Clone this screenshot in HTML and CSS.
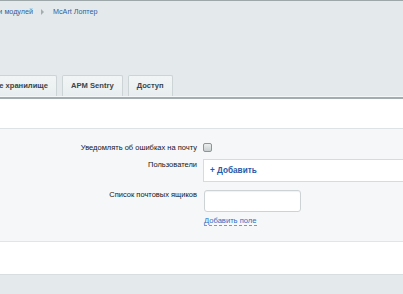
FILE: index.html
```html
<!DOCTYPE html>
<html lang="ru">
<head>
<meta charset="utf-8">
<title>McArt Лоптер</title>
<link rel="stylesheet" href="styles.css">
</head>
<body>
<div class="topline"></div>
<div class="breadcrumbs">
  <a class="crumb crumb-first" href="#">Настройки модулей</a>
  <span class="crumb-arrow"></span>
  <a class="crumb" href="#">McArt Лоптер</a>
</div>
<div class="tabs">
  <div class="tab tab-first">Облачное хранилище</div>
  <div class="tab">APM Sentry</div>
  <div class="tab">Доступ</div>
</div>
<div class="panel">
  <div class="panel-head"></div>
  <div class="form">
    <div class="row row-check">
      <div class="label">Уведомлять об ошибках на почту</div>
      <div class="control"><span class="checkbox"></span></div>
    </div>
    <div class="row row-users">
      <div class="label">Пользователи</div>
      <div class="control"><div class="userbox"><span class="add">+ Добавить</span></div></div>
    </div>
    <div class="row row-mail">
      <div class="label">Список почтовых ящиков</div>
      <div class="control">
        <div class="input"></div>
        <a class="addfield" href="#">Добавить поле</a>
      </div>
    </div>
  </div>
  <div class="panel-foot"></div>
</div>
</body>
</html>
```
FILE: styles.css
```css
html, body {
  margin: 0;
  padding: 0;
}
body {
  background: #e4eaeb;
  font-family: Arial, "Liberation Sans", Helvetica, sans-serif;
  font-size: 7.5px;
  color: #000;
  overflow: hidden;
  height: 294px;
}
.topline {
  height: 1px;
  background: #9da6a8;
}
.breadcrumbs {
  display: flex;
  align-items: center;
  height: 13px;
  margin-top: 4px;
  font-size: 7.2px;
  white-space: nowrap;
}
.crumb {
  color: #2f5f9e;
  text-decoration: none;
}
.crumb-first {
  flex: none;
  width: 80px;
  margin-left: -47px;
  text-align: right;
  overflow: hidden;
}
.crumb-arrow {
  flex: none;
  width: 0;
  height: 0;
  border-left: 3px solid #a4adb0;
  border-top: 3px solid transparent;
  border-bottom: 3px solid transparent;
  margin: 0 9px 0 8px;
}
.tabs {
  display: flex;
  gap: 5px;
  margin-top: 57px;
  white-space: nowrap;
  height: 21px;
}
.tab {
  flex: none;
  box-sizing: border-box;
  height: 21px;
  padding: 0 8px;
  line-height: 20px;
  font-weight: bold;
  font-size: 7.6px;
  color: #3a4649;
  border: 1px solid #ccd4d6;
  border-bottom: none;
  border-radius: 2px 2px 0 0;
  background: linear-gradient(#f2f5f6, #e8eeef);
}
.tab-first {
  width: 100px;
  margin-left: -43px;
  text-align: right;
  overflow: hidden;
}
.panel {
  border-top: 1px solid #f4f7f7;
}
.panel-head {
  height: 29px;
  background: #fff;
  border-top: 2px solid #a3acae;
  border-bottom: 1px solid #dde3e4;
}
.form {
  background: #f5f7f8;
  padding: 11px 0 15px;
  border-bottom: 1px solid #e0e5e6;
}
.row {
  display: grid;
  grid-template-columns: 197px 1fr;
  column-gap: 6px;
  align-items: start;
}
.label {
  text-align: right;
  line-height: 13px;
  padding-top: 1px;
  white-space: nowrap;
  color: #151515;
}
.row-users .label {
  padding-top: 2px;
}
.row-users {
  margin-top: 2px;
}
.row-mail {
  margin-top: 4px;
}
.row-mail .label {
  padding-top: 2px;
}
.checkbox {
  display: block;
  box-sizing: border-box;
  width: 9px;
  height: 9px;
  margin-top: 3px;
  border: 1px solid #8d9597;
  border-radius: 2px;
  background: linear-gradient(#eceff0, #c8cecf);
}
.userbox {
  box-sizing: border-box;
  height: 23px;
  margin-top: 3px;
  background: #fff;
  border: 1px solid #d6dcdd;
  border-right: none;
  padding-left: 6px;
  display: flex;
  align-items: center;
}
.add {
  color: #1f5caa;
  font-weight: bold;
  font-size: 8.2px;
}
.input {
  box-sizing: border-box;
  width: 97px;
  height: 22px;
  margin: 4px 0 0 1px;
  background: #fff;
  border: 1px solid #cdd3d5;
  border-radius: 3px;
  box-shadow: inset 0 1px 1px rgba(0,0,0,0.06);
}
.addfield {
  display: inline-block;
  margin: 4px 0 0 1px;
  font-size: 7.6px;
  line-height: 9px;
  color: #2f6cc2;
  text-decoration: none;
  border-bottom: 1px dashed #6d9ad6;
}
.panel-foot {
  height: 32px;
  background: #fff;
  border-bottom: 1px solid #d8dedf;
}
```
